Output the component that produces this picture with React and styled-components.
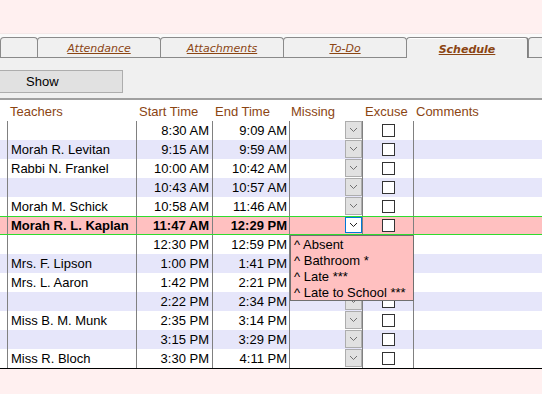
import React from 'react';
import styled, { createGlobalStyle, css } from 'styled-components';

const GlobalStyle = createGlobalStyle`
  body {
    margin: 0;
    background: #fff0f0;
    font-family: "Liberation Sans", Arial, sans-serif;
  }
`;

const Page = styled.div`
  width: 542px;
  height: 394px;
  overflow: hidden;
`;

const TopSpace = styled.div`
  height: 33px;
`;

const TabStrip = styled.div`
  display: flex;
  align-items: flex-end;
  height: 25px;
  box-sizing: border-box;
  background: #fafafa;
  border-top: 1px solid #f4e8e8;
  border-bottom: 1px solid #8a8a8a;
`;

const Tab = styled.div`
  flex: none;
  width: ${(p) => p.w}px;
  height: 20px;
  box-sizing: border-box;
  display: flex;
  align-items: center;
  justify-content: center;
  background: #f0f0f0;
  border: 1px solid #8a8a8a;
  border-bottom: none;
  border-radius: 4px 4px 0 0;
  margin-right: -1px;
  padding-top: 1px;
  font-family: "DejaVu Sans", Verdana, sans-serif;
  font-size: 11px;
  font-style: italic;
  color: #8b4513;
  text-decoration: underline;
  ${(p) =>
    p.active &&
    css`
      height: 21px;
      margin-bottom: -1px;
      padding-top: 3px;
      border-right: 2px solid #808080;
      box-shadow: inset 0 1px 0 #ffffff;
      font-weight: bold;
    `}
`;

const Toolbar = styled.div`
  height: 42px;
  box-sizing: border-box;
  background: #f0f0f0;
  padding-top: 12px;
  border-bottom: 2px solid #a0a0a0;
`;

const ShowButton = styled.button`
  display: block;
  width: 123px;
  height: 23px;
  box-sizing: border-box;
  background: #e1e1e1;
  border: 1px solid #adadad;
  border-left: none;
  padding: 0 0 0 26px;
  text-align: left;
  font-family: "Liberation Sans", Arial, sans-serif;
  font-size: 13px;
  color: #000;
`;

const Table = styled.div`
  position: relative;
  background: #ffffff;
  border-bottom: 1px solid #000;
`;

const cols = '7px 129px 76px 77px 73px 51px 1fr';

const HeadRow = styled.div`
  display: grid;
  grid-template-columns: ${cols};
  height: 21px;
  box-sizing: border-box;
  padding-top: 1px;
  align-items: center;
  font-size: 13px;
  color: #8b4513;
`;

const HeadCell = styled.div`
  padding-left: ${(p) => p.pad ?? 3}px;
  white-space: nowrap;
`;

const Row = styled.div`
  display: grid;
  grid-template-columns: ${cols};
  height: 19px;
  box-sizing: border-box;
  background: ${(p) => (p.alt ? '#e6e6fa' : '#ffffff')};
  font-size: 13px;
  color: #000;
  ${(p) =>
    p.current &&
    css`
      background: #ffc0c0;
      font-weight: bold;
      border-top: 1px solid #2fdc2f;
      border-bottom: 1px solid #2fdc2f;
    `}
`;

const Cell = styled.div`
  display: flex;
  align-items: center;
  justify-content: ${(p) => p.justify || 'flex-start'};
  padding: 0 ${(p) => p.pr ?? 0}px 0 ${(p) => p.pl ?? 0}px;
  border-left: ${(p) => (p.noLine ? 'none' : '1px solid #808080')};
  white-space: nowrap;
  overflow: hidden;
  min-width: 0;
`;

const DropButton = styled.div`
  align-self: stretch;
  margin: 0 0 1px auto;
  width: 17px;
  box-sizing: border-box;
  display: flex;
  align-items: center;
  justify-content: center;
  background: ${(p) => (p.focused ? '#ffffff' : '#e1e1e1')};
  border: 1px solid ${(p) => (p.focused ? '#0078d7' : '#adadad')};
  color: ${(p) => (p.focused ? '#222' : '#707070')};
`;

const Check = styled.div`
  width: 13px;
  height: 13px;
  box-sizing: border-box;
  background: #fff;
  border: 1px solid #333;
`;

const DropList = styled.div`
  position: absolute;
  left: 290px;
  top: 135px;
  width: 124px;
  height: 66px;
  box-sizing: border-box;
  background: #ffc0c0;
  border: 1px solid #707070;
  padding: 1px 0 0 3px;
  font-size: 13px;
  color: #000;
`;

const DropItem = styled.div`
  height: 16px;
  line-height: 16px;
  white-space: nowrap;
`;

const Chevron = () => (
  <svg width="9" height="6" viewBox="0 0 9 6">
    <path d="M1 1 L4.5 4.5 L8 1" fill="none" stroke="currentColor" strokeWidth="1" />
  </svg>
);

const rows = [
  ['', '8:30 AM', '9:09 AM'],
  ['Morah R. Levitan', '9:15 AM', '9:59 AM'],
  ['Rabbi N. Frankel', '10:00 AM', '10:42 AM'],
  ['', '10:43 AM', '10:57 AM'],
  ['Morah M. Schick', '10:58 AM', '11:46 AM'],
  ['Morah R. L. Kaplan', '11:47 AM', '12:29 PM'],
  ['', '12:30 PM', '12:59 PM'],
  ['Mrs. F. Lipson', '1:00 PM', '1:41 PM'],
  ['Mrs. L. Aaron', '1:42 PM', '2:21 PM'],
  ['', '2:22 PM', '2:34 PM'],
  ['Miss B. M. Munk', '2:35 PM', '3:14 PM'],
  ['', '3:15 PM', '3:29 PM'],
  ['Miss R. Bloch', '3:30 PM', '4:11 PM'],
];

const CURRENT = 5;

const tabs = [
  { label: '', w: 38 },
  { label: 'Attendance', w: 124 },
  { label: 'Attachments', w: 124 },
  { label: 'To-Do', w: 124 },
  { label: 'Schedule', w: 123, active: true },
  { label: '', w: 40 },
];

const options = ['Absent', 'Bathroom *', 'Late ***', 'Late to School ***'];

export default function App() {
  return (
    <Page>
      <GlobalStyle />
      <TopSpace />
      <TabStrip>
        {tabs.map((t, i) => (
          <Tab key={i} w={t.w} active={t.active}>
            {t.label}
          </Tab>
        ))}
      </TabStrip>
      <Toolbar>
        <ShowButton>Show</ShowButton>
      </Toolbar>
      <Table>
        <HeadRow>
          <div />
          <HeadCell>Teachers</HeadCell>
          <HeadCell>Start Time</HeadCell>
          <HeadCell>End Time</HeadCell>
          <HeadCell pad={2}>Missing</HeadCell>
          <HeadCell>Excuse</HeadCell>
          <HeadCell>Comments</HeadCell>
        </HeadRow>
        {rows.map(([name, start, end], i) => (
          <Row key={i} alt={i % 2 === 1} current={i === CURRENT}>
            <Cell noLine />
            <Cell pl={3}>{name}</Cell>
            <Cell justify="flex-end" pr={3}>{start}</Cell>
            <Cell justify="flex-end" pr={2}>{end}</Cell>
            <Cell>
              <DropButton focused={i === CURRENT}>
                <Chevron />
              </DropButton>
            </Cell>
            <Cell justify="center">
              <Check />
            </Cell>
            <Cell />
          </Row>
        ))}
        <DropList>
          {options.map((o) => (
            <DropItem key={o}>^ {o}</DropItem>
          ))}
        </DropList>
      </Table>
    </Page>
  );
}
